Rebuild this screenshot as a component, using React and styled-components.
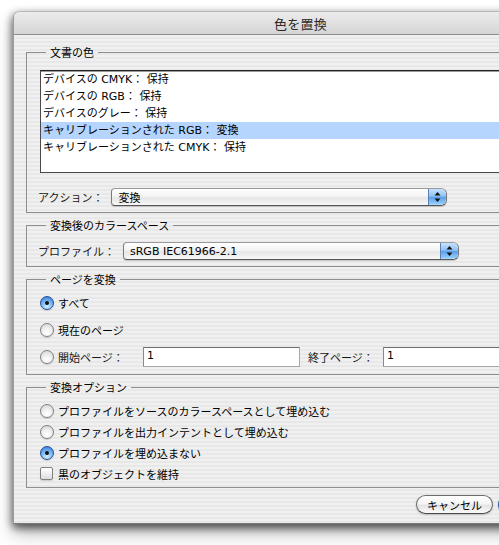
import React from "react";
import styled, { createGlobalStyle, css } from "styled-components";

const GlobalStyle = createGlobalStyle`
  html, body {
    margin: 0;
    padding: 0;
    background: #ffffff;
    overflow: hidden;
  }
  body {
    font-family: "DejaVu Sans", "Noto Sans CJK JP", sans-serif;
    font-size: 11px;
    color: #000;
  }
`;

const Page = styled.div`
  width: 499px;
  height: 545px;
  padding: 12px 0 0 13px;
  box-sizing: border-box;
  overflow: hidden;
`;

const Window = styled.div`
  width: 574px;
  border-radius: 6px 6px 0 0;
  border-left: 1px solid #9c9c9c;
  border-bottom: 1px solid #7a7a7a;
  box-sizing: border-box;
  background: repeating-linear-gradient(
    to bottom,
    #f0f0f0 0px,
    #f0f0f0 2px,
    #e8e8e8 2px,
    #e8e8e8 4px
  );
  box-shadow: 0 4px 8px rgba(0, 0, 0, 0.55), 0 10px 18px rgba(0, 0, 0, 0.25),
    -2px 2px 8px rgba(0, 0, 0, 0.15);
`;

const TitleBar = styled.div`
  height: 22px;
  border-top: 1px solid #b8b8b8;
  border-bottom: 1px solid #8c8c8c;
  border-radius: 6px 6px 0 0;
  box-sizing: content-box;
  margin-top: -1px;
  background: linear-gradient(#ececec, #dedede 60%, #d4d4d4);
  display: flex;
  align-items: center;
  justify-content: center;
  font-family: "Noto Sans CJK JP", sans-serif;
  font-size: 13px;
  color: #2a2a2a;
  letter-spacing: 0.2px;
`;

const Body = styled.div`
  padding: 10px 12px 9px 12px;
  display: flex;
  flex-direction: column;
`;

const Group = styled.fieldset`
  margin: ${(p) => (p.$first ? "0" : "5px 0 0 0")};
  border: 1px solid #8e8e8e;
  padding: ${(p) => p.$pad};
  min-width: 0;
  display: flex;
  flex-direction: column;
`;

const Legend = styled.legend`
  margin-left: 6px;
  padding: 0 4px;
  line-height: 14px;
  font-size: 11px;
  font-family: "Noto Sans CJK JP", sans-serif;
`;

const ListBox = styled.div`
  height: 103px;
  box-sizing: border-box;
  border: 1px solid #4a4a4a;
  border-top-color: #222;
  background: #fff;
  box-shadow: inset 0 1px 0 #9a9a9a;
  margin-right: -40px;
`;

const ListRow = styled.div`
  height: 17px;
  line-height: 17px;
  padding-left: 2px;
  white-space: nowrap;
  background: ${(p) => (p.$selected ? "#b5d5ff" : "transparent")};
`;

const FieldRow = styled.div`
  display: flex;
  align-items: center;
  gap: 8px;
  height: 18px;
  margin-top: ${(p) => p.$mt || 0}px;
`;

const Label = styled.span`
  white-space: nowrap;
  color: #1a1a1a;
  min-width: ${(p) => (p.$w ? `${p.$w}px` : "auto")};
  margin-left: ${(p) => p.$ml || 0}px;
`;

const Popup = styled.div`
  width: ${(p) => p.$w}px;
  height: 18px;
  box-sizing: border-box;
  display: flex;
  align-items: center;
  padding-left: 6px;
  border: 1px solid #7a7a7a;
  border-top-color: #9a9a9a;
  border-bottom-color: #555;
  border-radius: 4px 6px 6px 4px;
  background: linear-gradient(#ffffff, #f4f4f4 45%, #e6e6e6 55%, #f8f8f8);
  box-shadow: 0 1px 1px rgba(0, 0, 0, 0.18);
  overflow: hidden;
  white-space: nowrap;
`;

const PopupArrows = styled.span`
  margin-left: auto;
  width: 17px;
  height: 100%;
  display: flex;
  align-items: center;
  justify-content: center;
  border-left: 1px solid #5d7fb5;
  border-radius: 0 5px 5px 0;
  background: linear-gradient(#c6e2ff, #8fc2f4 45%, #5b9fea 52%, #8cc8fa 90%, #b8e0ff);
`;

const RadioRow = styled.div`
  display: flex;
  align-items: center;
  gap: 4px;
  height: ${(p) => p.$h}px;
  margin-top: ${(p) => p.$mt || 0}px;
  white-space: nowrap;
`;

const Radio = styled.span`
  width: 14px;
  height: 14px;
  box-sizing: border-box;
  border-radius: 50%;
  flex: none;
  display: flex;
  align-items: center;
  justify-content: center;
  border: 1px solid #808080;
  background: radial-gradient(circle at 50% 75%, #ffffff 0, #f2f2f2 40%, #cfcfcf 100%);
  box-shadow: 0 1px 1px rgba(0, 0, 0, 0.15);
  ${(p) =>
    p.$checked &&
    css`
      border-color: #274f9a;
      background: radial-gradient(circle at 50% 80%, #d4f0ff 0, #7cbcf5 45%, #2e6fd6 100%);
      &::after {
        content: "";
        width: 4px;
        height: 4px;
        border-radius: 50%;
        background: #111;
      }
    `}
`;

const Check = styled.span`
  width: 13px;
  height: 13px;
  box-sizing: border-box;
  flex: none;
  border: 1px solid #808080;
  border-radius: 2px;
  background: linear-gradient(#ffffff, #f0f0f0 50%, #dcdcdc);
  box-shadow: 0 1px 1px rgba(0, 0, 0, 0.15);
  margin-right: 1px;
`;

const TextField = styled.div`
  width: ${(p) => p.$w}px;
  height: 20px;
  box-sizing: border-box;
  flex: none;
  background: #fff;
  border: 1px solid #a8a8a8;
  border-top-color: #6e6e6e;
  border-left-color: #8a8a8a;
  padding: 0 0 0 3px;
  line-height: 15px;
  font-size: 11px;
  color: #000;
`;

const ButtonRow = styled.div`
  display: flex;
  justify-content: flex-end;
  gap: 5px;
  margin-top: 7px;
  padding-right: 7px;
`;

const Button = styled.div`
  width: ${(p) => p.$w}px;
  height: 19px;
  box-sizing: border-box;
  border-radius: 10px;
  display: flex;
  align-items: center;
  justify-content: center;
  border: 1px solid ${(p) => (p.$default ? "#2e5aa3" : "#6e6e6e")};
  border-bottom-color: ${(p) => (p.$default ? "#1d3f7a" : "#4a4a4a")};
  background: ${(p) =>
    p.$default
      ? "linear-gradient(#c8e4ff, #7ab8f2 45%, #3f8ae6 52%, #88c6fa)"
      : "linear-gradient(#ffffff, #f5f5f5 45%, #e4e4e4 55%, #fafafa)"};
  box-shadow: 0 1px 2px rgba(0, 0, 0, 0.22);
  font-family: "Noto Sans CJK JP", sans-serif;
  font-size: 11px;
`;

const ArrowsIcon = () => (
  <svg width="7" height="12" viewBox="0 0 7 12">
    <path d="M3.5 1 L6.5 4.5 L0.5 4.5 Z" fill="#111" />
    <path d="M3.5 11 L6.5 7.5 L0.5 7.5 Z" fill="#111" />
  </svg>
);

const colorItems = [
  { text: "デバイスの CMYK： 保持" },
  { text: "デバイスの RGB： 保持" },
  { text: "デバイスのグレー： 保持" },
  { text: "キャリブレーションされた RGB： 変換", selected: true },
  { text: "キャリブレーションされた CMYK： 保持" },
];

const options = [
  { text: "プロファイルをソースのカラースペースとして埋め込む" },
  { text: "プロファイルを出力インテントとして埋め込む" },
  { text: "プロファイルを埋め込まない", checked: true },
];

export default function App() {
  return (
    <>
      <GlobalStyle />
      <Page>
        <Window>
          <TitleBar>色を置換</TitleBar>
          <Body>
            <Group $first $pad="11px 0 6px 13px">
              <Legend>文書の色</Legend>
              <ListBox>
                {colorItems.map((item) => (
                  <ListRow key={item.text} $selected={item.selected}>
                    {item.text}
                  </ListRow>
                ))}
              </ListBox>
              <FieldRow $mt={15}>
                <Label $ml={-2}>アクション：</Label>
                <Popup $w={336}>
                  変換
                  <PopupArrows>
                    <ArrowsIcon />
                  </PopupArrows>
                </Popup>
              </FieldRow>
            </Group>

            <Group $pad="10px 0 6px 13px">
              <Legend>変換後のカラースペース</Legend>
              <FieldRow>
                <Label $ml={-2}>プロファイル：</Label>
                <Popup $w={336}>
                  sRGB IEC61966-2.1
                  <PopupArrows>
                    <ArrowsIcon />
                  </PopupArrows>
                </Popup>
              </FieldRow>
            </Group>

            <Group $pad="7px 0 7px 13px">
              <Legend>ページを変換</Legend>
              <RadioRow $h={20}>
                <Radio $checked />
                すべて
              </RadioRow>
              <RadioRow $h={20} $mt={7}>
                <Radio />
                現在のページ
              </RadioRow>
              <RadioRow $h={20} $mt={7}>
                <Radio />
                <Label $w={81}>開始ページ：</Label>
                <TextField $w={157}>1</TextField>
                <Label $w={71} $ml={4}>終了ページ：</Label>
                <TextField $w={157}>1</TextField>
              </RadioRow>
            </Group>

            <Group $pad="6px 0 3px 13px">
              <Legend>変換オプション</Legend>
              {options.map((o) => (
                <RadioRow key={o.text} $h={21}>
                  <Radio $checked={o.checked} />
                  {o.text}
                </RadioRow>
              ))}
              <RadioRow $h={21}>
                <Check />
                黒のオブジェクトを維持
              </RadioRow>
            </Group>

            <ButtonRow>
              <Button $w={77}>キャンセル</Button>
              <Button $w={70} $default aria-label="OK" />
            </ButtonRow>
          </Body>
        </Window>
      </Page>
    </>
  );
}
